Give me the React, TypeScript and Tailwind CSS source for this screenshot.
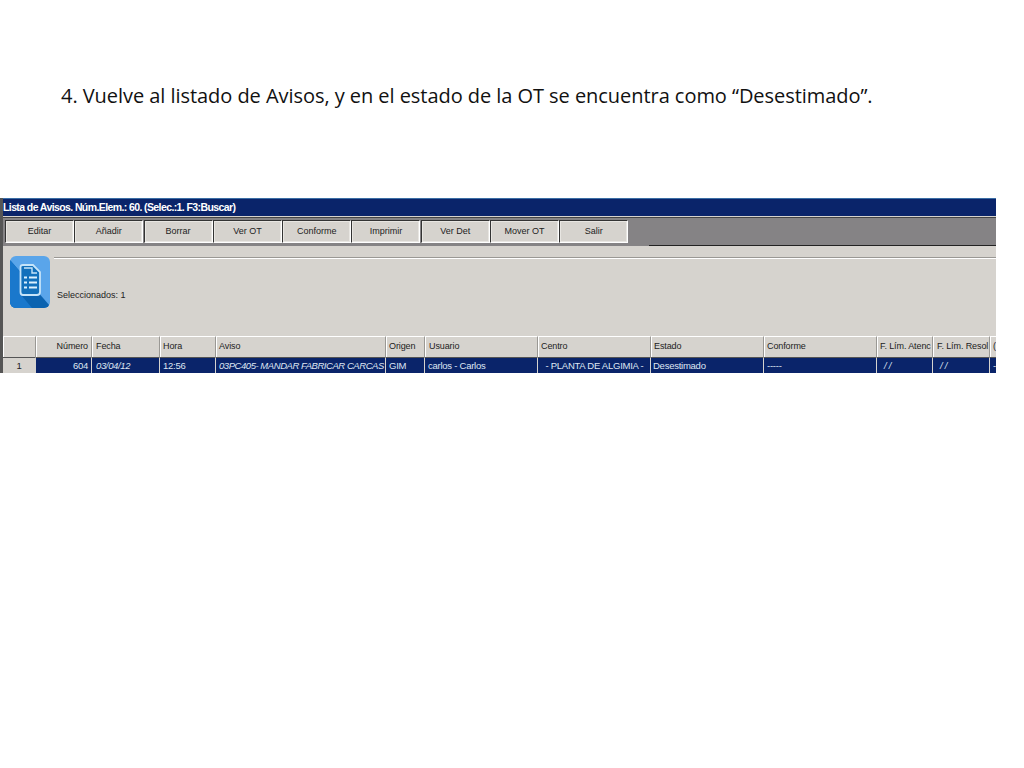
import React from 'react';

const buttons = ['Editar', 'Añadir', 'Borrar', 'Ver OT', 'Conforme', 'Imprimir', 'Ver Det', 'Mover OT', 'Salir'];

const rowCell = 'bg-[#0a246a] text-[#dfe6f2]';

const columns = [
  { title: '', value: '1', width: 'w-[33px]', head: 'justify-center', cell: 'bg-[#d6d3ce] text-[#222] justify-center tracking-[-0.25px]' },
  { title: 'Número', value: '604', width: 'w-[56px]', head: 'justify-end pr-[3px]', cell: `${rowCell} justify-end pr-[3px] tracking-[-0.25px]` },
  { title: 'Fecha', value: '03/04/12', width: 'w-[68px]', head: 'pl-[3px]', cell: `${rowCell} italic pl-[4px] tracking-[-0.35px]` },
  { title: 'Hora', value: '12:56', width: 'w-[56px]', head: 'pl-[2px]', cell: `${rowCell} pl-[3px] tracking-[-0.25px]` },
  { title: 'Aviso', value: '03PC405- MANDAR FABRICAR CARCAS', width: 'w-[170px]', head: 'pl-[2px]', cell: `${rowCell} italic pl-[3px] tracking-[-0.45px]` },
  { title: 'Origen', value: 'GIM', width: 'w-[39px]', head: 'pl-[2px]', cell: `${rowCell} pl-[3px] tracking-[-0.25px]` },
  { title: 'Usuario', value: 'carlos - Carlos', width: 'w-[113px]', head: 'pl-[3px]', cell: `${rowCell} pl-[3px] tracking-[-0.25px]` },
  { title: 'Centro', value: ' - PLANTA DE ALGIMIA - ', width: 'w-[113px]', head: 'pl-[2px]', cell: `${rowCell} pl-[5px] tracking-[-0.25px]` },
  { title: 'Estado', value: 'Desestimado', width: 'w-[113px]', head: 'pl-[2px]', cell: `${rowCell} pl-[2px] tracking-[-0.25px]` },
  { title: 'Conforme', value: '-----', width: 'w-[113px]', head: 'pl-[2px]', cell: `${rowCell} pl-[3px] tracking-[-0.25px]` },
  { title: 'F. Lím. Atenc', value: '/ /', width: 'w-[56px]', head: 'pl-[2px]', cell: `${rowCell} italic pl-[7px] tracking-[-0.25px]` },
  { title: 'F. Lím. Resol', value: '/ /', width: 'w-[57px]', head: 'pl-[3px]', cell: `${rowCell} italic pl-[7px] tracking-[-0.25px]` },
  { title: '(', value: '-', width: 'w-[7px]', head: 'pl-[2px]', cell: `${rowCell} pl-[3px] tracking-[-0.25px]` },
];

function DocIcon() {
  return (
    <svg width="40" height="52" viewBox="0 0 40 52" className="shrink-0">
      <defs>
        <clipPath id="tile">
          <rect width="40" height="52" rx="6" />
        </clipPath>
      </defs>
      <g clipPath="url(#tile)">
        <rect width="40" height="52" fill="#5aa5ea" />
        <path d="M0 4 L40 50 V52 H0 Z" fill="#0b63b0" />
        <path d="M0 4 L12 18 V40 L22 52 H0 Z" fill="#1a78cc" />
      </g>
      <path d="M13 9 H23 L30 16 V36 Q30 39 27 39 H13 Q10.5 39 10.5 36 V11 Q10.5 9 13 9 Z" fill="#1270bb" stroke="#c6e4f9" strokeWidth="1.8" />
      <path d="M14 12 H22 V17 H27" fill="none" stroke="#c6e4f9" strokeWidth="1.4" />
      <path d="M14 21.5 H17 M19 21.5 H27 M14 26.5 H17 M19 26.5 H27 M14 31.5 H17 M19 31.5 H27" stroke="#dcf0fd" strokeWidth="2.2" />
    </svg>
  );
}

export default function App() {
  return (
    <div className="w-[1024px] h-[768px] bg-white overflow-hidden font-['Liberation_Sans',sans-serif]">
      <h1 className="pt-[83px] pl-[61px] h-[198px] text-[20px] leading-[26px] text-[#111] font-['Open_Sans',sans-serif] tracking-[-0.05px]">
        4. Vuelve al listado de Avisos, y en el estado de la OT se encuentra como “Desestimado”.
      </h1>

      <div className="w-[996px] h-[175px] flex flex-col bg-[#d6d3ce] border-l-[3px] border-[#555] overflow-hidden">
        <div className="h-[18px] -ml-[3px] pl-[3px] bg-[#0a246a] border-t border-[#3a6ea5] text-white text-[10.5px] leading-[17px] font-bold whitespace-nowrap tracking-[-0.6px]">
          Lista de Avisos. Núm.Elem.: 60. (Selec.:1. F3:Buscar)
        </div>

        <div className="h-[29px] mt-[1px] flex bg-[#858385] border-t border-[#444] pl-[2px]">
          <div className="flex pt-[2px] gap-[0.3px]">
            {buttons.map((label) => (
              <button
                key={label}
                className="w-[69px] h-[23px] bg-[#d6d3ce] border border-[#333] border-b-white border-r-white outline outline-1 -outline-offset-2 outline-[#e8e6e2] text-[9px] text-[#222]"
              >
                {label}
              </button>
            ))}
          </div>
          <div className="flex-1 ml-[21px] border-b border-[#222]" />
        </div>

        <div className="relative h-[90px] flex">
          <div className="mt-[10px] ml-[7px] mb-auto">
            <DocIcon />
          </div>
          <div className="flex-1 flex flex-col">
            <div className="mt-[11px] ml-[4px] h-[2px] bg-[#9a9894] border-b border-white" />
            <div className="mt-[30px] ml-[7px] text-[9px] leading-[12px] text-[#222]">Seleccionados: 1</div>
          </div>
        </div>

        <div className="flex h-[21px]">
          {columns.map((col) => (
            <div
              key={col.title}
              className={`${col.width} shrink-0 flex items-center overflow-hidden whitespace-nowrap border-t border-l border-white border-r border-r-[#9a9894] text-[9px] tracking-[-0.1px] text-[#222] ${col.head}`}
            >
              {col.title}
            </div>
          ))}
        </div>
        <div className="flex h-[16px]">
          {columns.map((col) => (
            <div
              key={col.title}
              className={`${col.width} shrink-0 flex items-center overflow-hidden whitespace-pre border-r border-[#d6d3ce] border-t border-t-[#555] pt-[1px] text-[9.5px] ${col.cell}`}
            >
              {col.value}
            </div>
          ))}
        </div>
      </div>
    </div>
  );
}
